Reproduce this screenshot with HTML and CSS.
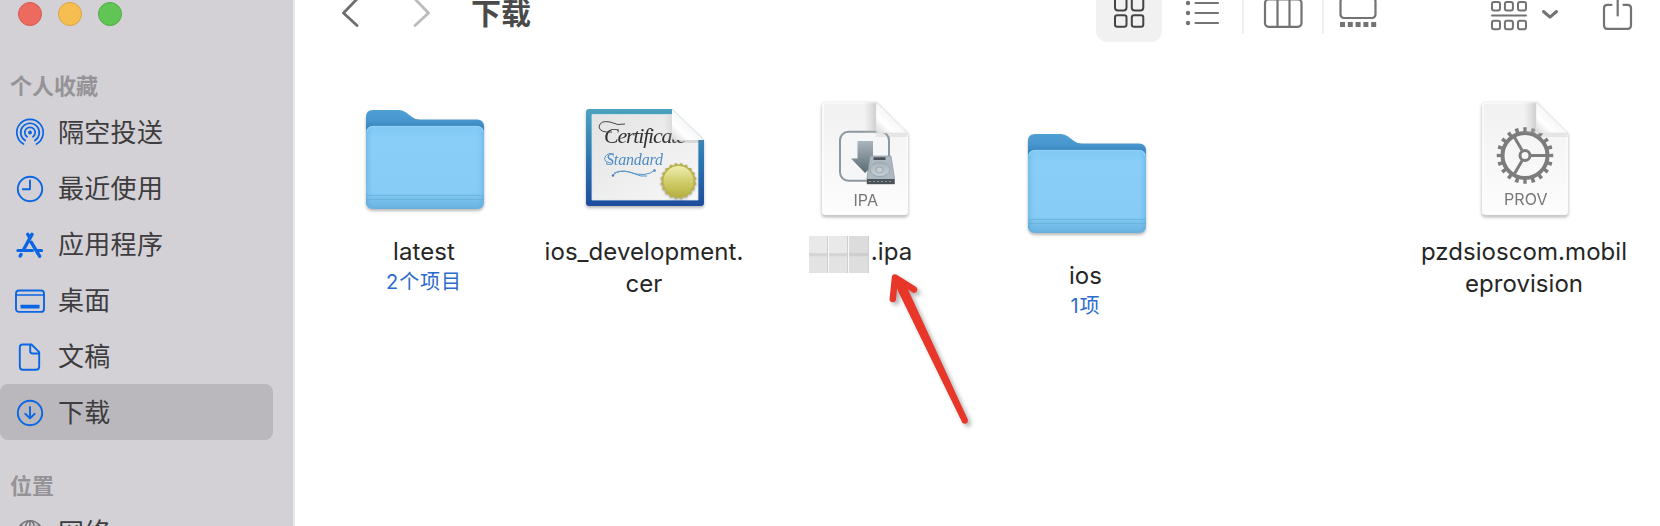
FILE: index.html
```html
<!DOCTYPE html>
<html lang="zh-CN">
<head>
<meta charset="utf-8">
<title>下载</title>
<link rel="stylesheet" href="styles.css">
</head>
<body>
<div class="window">
  <aside class="sidebar">
    <div class="lights"><span class="light red"></span><span class="light yellow"></span><span class="light green"></span></div>
    <h2 class="section">个人收藏</h2>
    <ul class="list">
      <li class="item"><svg class="glyph airdrop" viewBox="0 0 32 32"><circle cx="16" cy="15.500" r="1.900" fill="currentColor" stroke="none"/><path d="M13.100 19.800A5.200 5.200 0 1 1 18.900 19.800M11.200 23.500A9.300 9.300 0 1 1 20.800 23.500M9.500 27A13.200 13.200 0 1 1 22.500 27"/></svg><span>隔空投送</span></li>
      <li class="item"><svg class="glyph" viewBox="0 0 32 32"><circle cx="16" cy="16" r="12.2"/><path d="M16 7.5V16.3H8.8"/></svg><span>最近使用</span></li>
      <li class="item"><svg class="glyph" viewBox="0 0 32 32"><path stroke-width="3.4" d="M13.800 5.400 16 9M18 5.400 9.800 20.200M17.300 13.400 25.600 27.200M7 25.400 6.200 27"/><path stroke-width="3" d="M3.800 21.400H18.500M23.600 21.400H27.600"/></svg><span>应用程序</span></li>
      <li class="item"><svg class="glyph" viewBox="0 0 32 32"><rect x="2" y="5.5" width="28" height="21.4" rx="3"/><path stroke-width="1.5" d="M2 10H30"/><rect x="6.5" y="19.8" width="19" height="3.8" rx=".5" fill="currentColor" stroke="none"/></svg><span>桌面</span></li>
      <li class="item"><svg class="glyph" viewBox="0 0 32 32"><path d="M8.500 3.500H17.500L25.200 11.200V25.500Q25.200 28.800 22 28.800H8.800Q5.800 28.800 5.800 25.500V6.500Q5.800 3.500 8.500 3.500ZM16.200 3.500V10.300Q16.200 12.500 18.400 12.500H25"/></svg><span>文稿</span></li>
      <li class="item selected"><svg class="glyph" viewBox="0 0 32 32"><circle cx="16" cy="16" r="12.2"/><path d="M16 10V21M11.3 16.8 16 21.4 20.7 16.8"/></svg><span>下载</span></li>
    </ul>
    <h2 class="section places">位置</h2>
    <ul class="list">
      <li class="item"><svg class="glyph network" viewBox="0 0 32 32"><circle cx="16" cy="16" r="12.2"/><ellipse cx="16" cy="16" rx="5.5" ry="12.2"/><path d="M16 4V28M4 16H28M7 8.5Q16 14 25 8.5"/></svg><span>网络</span></li>
    </ul>
  </aside>

  <main class="main">
    <header class="toolbar">
      <svg class="nav" viewBox="340 0 92 42"><path stroke="#6e6e6e" d="M357-1 343.500 13 357 25.500"/><path stroke="#bcbcbc" d="M415-1 428.500 13 415 25.500"/></svg>
      <h1 class="title">下载</h1>
      <div class="views">
        <span class="view active"><svg width="66" height="42" viewBox="1096 0 66 42"><path stroke="#444" stroke-width="2" d="M1115 -2V7.500Q1115 10.500 1118 10.500H1123.500Q1126.500 10.500 1126.500 7.500V-2M1131.800 -2V7.500Q1131.800 10.500 1134.800 10.500H1140.300Q1143.300 10.500 1143.300 7.500V-2"/><rect x="1115" y="15.300" width="11.500" height="11.500" rx="2.300" stroke="#444" stroke-width="2"/><rect x="1131.800" y="15.300" width="11.500" height="11.500" rx="2.300" stroke="#444" stroke-width="2"/></svg></span>
        <span class="view list-view"><svg width="80" height="42" viewBox="1162 0 80 42"><path d="M1195.500 3H1218M1195.500 13H1218M1195.500 23H1218"/><g fill="#737373" stroke="none"><circle cx="1188" cy="3" r="2.200"/><circle cx="1188" cy="13" r="2.200"/><circle cx="1188" cy="23" r="2.200"/></g></svg></span>
        <span class="view column-view"><svg width="79" height="42" viewBox="1243 0 79 42"><rect x="1265" y="-.5" width="36.500" height="27.300" rx="3.500"/><path d="M1277.500 0V26M1289.500 0V26"/></svg></span>
        <span class="view gallery-view"><svg width="76" height="42" viewBox="1323 0 76 42"><rect x="1340.500" y="-2" width="35" height="20" rx="3.500"/><path stroke="#737373" stroke-width="5" stroke-linecap="butt" stroke-dasharray="5 2.800" d="M1340 24.500H1376.500"/></svg></span>
      </div>
      <svg class="tools" viewBox="1480 0 160 42"><g stroke-width="2"><rect x="1492" y="2" width="8" height="8.500" rx="2"/><rect x="1504.900" y="2" width="8" height="8.500" rx="2"/><rect x="1518" y="2" width="8" height="8.500" rx="2"/><rect x="1492" y="20.700" width="8" height="8.500" rx="2"/><rect x="1504.900" y="20.700" width="8" height="8.500" rx="2"/><rect x="1518" y="20.700" width="8" height="8.500" rx="2"/><path d="M1492 15.500H1526"/></g><path stroke-width="3" d="M1543.500 11.500 1550 17.200 1556.500 11.500"/><path stroke-width="2.200" d="M1611.500 4.800H1607.500Q1604 4.800 1604 8.300V25.200Q1604 28.800 1607.500 28.800H1627.500Q1631 28.800 1631 25.200V8.300Q1631 4.800 1627.500 4.800H1623.500M1617.700 -2V15.500"/></svg>
    </header>

    <section class="files">
      <svg class="defs" width="0" height="0">
        <defs>
          <linearGradient id="back" x1="0" y1="0" x2="0" y2="1"><stop offset="0" stop-color="#509fd3"/><stop offset=".12" stop-color="#4695ce"/><stop offset=".2" stop-color="#3780bb"/></linearGradient>
          <linearGradient id="front" x1="0" y1="0" x2="0" y2="1"><stop offset="0" stop-color="#80caf5"/><stop offset=".15" stop-color="#89cef9"/><stop offset=".8" stop-color="#86ccf7"/><stop offset=".87" stop-color="#7bc2ed"/><stop offset="1" stop-color="#68b1df"/></linearGradient>
          <linearGradient id="edge"><stop offset="0" stop-color="#4c9bce" stop-opacity=".35"/><stop offset=".06" stop-color="#6bb8e8" stop-opacity="0"/><stop offset=".94" stop-color="#6bb8e8" stop-opacity="0"/><stop offset="1" stop-color="#4c9bce" stop-opacity=".35"/></linearGradient>
          <linearGradient id="frame" x1="0" y1="0" x2="0" y2="1"><stop offset="0" stop-color="#4aa3bf"/><stop offset=".5" stop-color="#2d78b2"/><stop offset="1" stop-color="#1d4c9c"/></linearGradient>
          <linearGradient id="sheet" x1="0" y1="0" x2="0" y2="1"><stop offset="0" stop-color="#f1f1f1"/><stop offset="1" stop-color="#fdfdfd"/></linearGradient>
          <linearGradient id="paper" x1="0" y1="0" x2="1" y2="1"><stop offset="0" stop-color="#e3e3e3"/><stop offset="1" stop-color="#f8f8f8"/></linearGradient>
          <linearGradient id="fold" x1=".5" y1=".5" x2="0" y2="1"><stop offset="0" stop-color="#f7f7f7"/><stop offset=".45" stop-color="#fff"/><stop offset="1" stop-color="#d7d7d7"/></linearGradient>
          <linearGradient id="shade"><stop offset="0" stop-color="#bbb" stop-opacity="0"/><stop offset="1" stop-color="#aaa" stop-opacity=".5"/></linearGradient>
          <linearGradient id="gold" x1="0" y1="0" x2="0" y2="1"><stop offset="0" stop-color="#eeedae"/><stop offset=".5" stop-color="#d3cf70"/><stop offset="1" stop-color="#b8b040"/></linearGradient>
          <linearGradient id="steel" x1="0" y1="0" x2="0" y2="1"><stop offset="0" stop-color="#aab6bd"/><stop offset="1" stop-color="#5b6a73"/></linearGradient>
          <linearGradient id="disk" x1="0" y1="0" x2="0" y2="1"><stop offset="0" stop-color="#a9b5bc"/><stop offset="1" stop-color="#c5d0d6"/></linearGradient>
          <symbol id="folder" viewBox="0 0 130 130">
            <path fill="url(#back)" d="M7 109V22Q7 15 14 15H40Q44 15 47 17.500L53 22Q56 24.500 61 24.500H118Q125 24.500 125 32V106Z"/>
            <path fill="url(#front)" d="M7 38Q7 31 14 31H118Q125 31 125 38V106Q125 114 118 114H14Q7 114 7 106Z"/>
            <path fill="url(#edge)" d="M7 38Q7 31 14 31H118Q125 31 125 38V106Q125 114 118 114H14Q7 114 7 106Z"/>
            <path fill="none" stroke="#9cd7fb" stroke-width=".8" d="M8 37Q9 31.400 14 31.400H118Q123 31.400 124 37"/>
            <path stroke="#62aeda" stroke-width="1" opacity=".65" d="M7 100.500H125M7 104.500H125"/>
          </symbol>
          <symbol id="document" viewBox="0 0 130 130">
            <path fill="url(#sheet)" stroke="#e4e4e4" stroke-width=".6" d="M26 7H77L108 38V117Q108 120 105 120H25Q22 120 22 117V10Q22 7 26 7Z"/>
            <path fill="none" stroke="#fff" stroke-width="1.200" d="M23 118V11Q23 8 26 8H76M107 39V116Q107 119 104 119H25"/>
          </symbol>
          <symbol id="corner" viewBox="0 0 130 130">
            <path fill="url(#shade)" d="M64 7.500H76V38H64Z"/>
            <path fill="#999" opacity=".16" d="M76 38H108V42H76Z"/>
            <path fill="url(#fold)" stroke="#ddd" stroke-width=".5" d="M76 7 108 38H78Q76 38 76 35Z"/>
          </symbol>
        </defs>
      </svg>

      <article class="file">
        <svg class="icon"><use href="#folder"/></svg>
        <div class="name">latest</div><div class="count">2个项目</div>
      </article>

      <article class="file">
        <svg class="icon" viewBox="579 95 130 130">
          <path fill="url(#frame)" d="M589 109H672L704 140V203Q704 206 701 206H589Q586 206 586 203V112Q586 109 589 109Z"/>
          <path fill="url(#paper)" stroke="#dbe7ee" stroke-width=".8" d="M592 114.500H673L698 139V200H592Z"/>
          <text class="cert" x="604" y="143" textLength="82">Certificate</text>
          <path fill="none" stroke="#444" stroke-width="1" d="M612 132Q600 133 599 127Q600 120 610 122Q618 126 625 124"/>
          <text class="standard" x="606" y="164.500" textLength="57">Standard</text>
          <path fill="none" stroke="#5b95c9" stroke-width="1" d="M611 163Q603 162 605 157Q608 152 614 154M613 175Q619 169 629 172Q646 178 655 170M614 173Q625 169 635 174Q641 177 647 176"/><circle cx="613" cy="175.500" r="1.300" fill="#4b83bd"/><circle cx="654.500" cy="170.500" r="1.300" fill="#4b83bd"/>
          <path fill="url(#shade)" opacity=".5" d="M663 115H672V140H663Z"/>
          <path fill="#777" opacity=".2" d="M672 140H704V143H672Z"/>
          <path fill="url(#fold)" d="M672 109 704 140H675Q672 140 672 137Z"/>
          <g class="seal" transform="translate(678.500 181)"><g fill="#b9b14a"><rect x="-13" y="-13" width="26" height="26"/><rect x="-13" y="-13" width="26" height="26" transform="rotate(18)"/><rect x="-13" y="-13" width="26" height="26" transform="rotate(36)"/><rect x="-13" y="-13" width="26" height="26" transform="rotate(54)"/><rect x="-13" y="-13" width="26" height="26" transform="rotate(72)"/></g><circle r="15" fill="url(#gold)"/></g>
        </svg>
        <div class="name">ios_development.<br>cer</div>
      </article>

      <article class="file">
        <svg class="icon" viewBox="799 95 130 130">
          <use href="#document" x="800" y="95" width="130" height="130"/>
          <rect x="840" y="131.700" width="49" height="49" rx="8.500" fill="#f5f6f8" stroke="#8e999f" stroke-width="2"/>
          <path fill="url(#steel)" d="M857.500 141H873V158.500H880L865 173 851 158.500H857.500Z"/>
          <path fill="#adb9c0" stroke="#7e8b93" stroke-width=".6" d="M870 156H891L894.500 178V184H867V178Z"/><path fill="#4a5257" d="M867 179H894.500V184H867ZM873.500 157.300H885.500V160H873.500Z"/>
          <ellipse cx="880" cy="169.500" rx="10" ry="7" fill="url(#disk)" stroke="#8c989f" stroke-width=".7"/><ellipse cx="879.500" cy="170" rx="3.600" ry="2.900" fill="#c4ced3" stroke="#8c989f" stroke-width=".7"/><path stroke="#87949b" stroke-width="1.200" stroke-dasharray="2 2" d="M869 181.500H893"/>
          <use href="#corner" x="800" y="95" width="130" height="130"/>
          <text class="kind" x="853.500" y="205.800" textLength="24.500">IPA</text>
        </svg>
        <div class="name ipa"><span class="mosaic"><i></i><i></i><i></i></span>.ipa</div>
      </article>

      <article class="file lower">
        <svg class="icon"><use href="#folder"/></svg>
        <div class="name">ios</div><div class="count">1项</div>
      </article>

      <article class="file last">
        <svg class="icon" viewBox="1459 95 130 130">
          <use href="#document" x="1460" y="95" width="130" height="130"/>
          <g transform="translate(1525 155.500)" fill="none" stroke="#7c7c7c"><circle r="22.500" stroke-width="4"/><circle r="26" stroke-width="4.500" pathLength="40" stroke-dasharray=".85 1.150" stroke-dashoffset=".425"/><circle r="5" stroke-width="3"/><path stroke-width="3" d="M6 0H22M-3 5.200-11 19M-3-5.200-11-19"/></g>
          <use href="#corner" x="1460" y="95" width="130" height="130"/>
          <text class="kind" x="1504" y="205" textLength="43.500">PROV</text>
        </svg>
        <div class="name">pzdsioscom.mobil<br>eprovision</div>
      </article>
    </section>
  </main>

  <svg class="arrow" viewBox="870 265 120 170"><path fill="none" stroke="#e83628" stroke-width="6.500" stroke-linecap="round" stroke-linejoin="round" d="M892.800 299 895 277.500 914 289.500"/><path fill="none" stroke="#e83628" stroke-width="5.500" stroke-linecap="round" d="M895.500 278 965 421"/><path fill="#e83628" d="M895 277 905 283 968 420 962.500 423 898 291Z"/></svg>
</div>
</body>
</html>
```
FILE: styles.css
```css
* { box-sizing: border-box; }
body { margin: 0; background: #fff; font-family: Inter, "Noto Sans CJK SC", sans-serif; }
h1, h2, ul { margin: 0; padding: 0; list-style: none; }
.window { position: relative; display: flex; width: 1660px; height: 526px; overflow: hidden; }

.sidebar { flex: none; width: 295px; height: 526px; overflow: hidden; background: #d3d1d5; border-right: 2px solid #e7e6e8; }
.lights { display: flex; gap: 16px; height: 69px; padding: 2px 0 0 18px; }
.light { width: 24px; height: 24px; border-radius: 50%; border: 1px solid; }
.red { background: #ed6a5f; border-color: #d55a50; }
.yellow { background: #f6be50; border-color: #daa441; }
.green { background: #61c555; border-color: #50ac45; }
.section { height: 35px; padding-left: 10px; font-size: 22px; line-height: 34px; font-weight: 700; color: #959397; }
.item { display: flex; align-items: center; gap: 12px; width: 273px; height: 56px; padding: 2px 0 0 14px; font-size: 26px; letter-spacing: .3px; line-height: 54px; color: #3d3c3f; }
.selected { background: #bab8bc; border-radius: 8px; }
.places { margin-top: 29px; }
.glyph { width: 32px; height: 32px; color: #0a66e4; fill: none; stroke: currentColor; stroke-width: 1.9; stroke-linecap: round; stroke-linejoin: round; }
.airdrop { stroke-width: 1.7; }
.network { color: #77757a; stroke-width: 1.6; }

.main { flex: 1; background: #fff; }
.toolbar { display: flex; height: 42px; padding-left: 45px; overflow: hidden; }
.toolbar svg { flex: none; height: 42px; fill: none; stroke: #737373; stroke-width: 2.2; stroke-linecap: round; stroke-linejoin: round; }
.toolbar .nav { width: 92px; stroke-width: 2.8; }
.title { margin-left: 39px; width: 625px; font-size: 30px; line-height: 26px; font-weight: 700; color: #4a4a4a; }
.views { display: flex; }
.view { display: flex; height: 42px; }
.active { background: #f1f1f1; border-radius: 0 0 11px 11px; }
.column-view, .gallery-view { position: relative; padding-left: 1px; }
.column-view::before, .gallery-view::before { content: ""; position: absolute; left: 0; top: 0; width: 2px; height: 34px; background: #efefef; }
.toolbar .tools { width: 160px; margin-left: 81px; }

.files { display: grid; grid-template-columns: repeat(6, 220px); padding: 53px 0 0 19px; }
.defs { position: absolute; }
.file { display: flex; flex-direction: column; align-items: center; }
.last { grid-column: 6; }
.lower { padding: 24px 0 0 3px; }
.icon { width: 130px; height: 130px; margin-bottom: 11px; filter: drop-shadow(0 2px 1.5px rgba(0, 0, 0, .28)); }
.name { font-size: 24px; line-height: 32px; letter-spacing: .06px; color: #262626; text-align: center; white-space: nowrap; }
.count { font-size: 20px; line-height: 28px; letter-spacing: .9px; color: #2c6ccc; }
.ipa { display: flex; align-items: center; margin-left: -7px; }
.mosaic { display: flex; gap: 1px; width: 60px; height: 37px; margin: 0 2px -5px 0; background: #f8f8f8; }
.mosaic i { flex: 1; background: linear-gradient(#e9e9e9 45%, #d5d5d5 46% 54%, #e3e3e3 56%); border-right: 1px solid #cfcfcf; }
.mosaic i:last-child { background: linear-gradient(#dcdcdc 45%, #cecece 46% 54%, #dedede 56%); }
.kind { font: 16px Inter, sans-serif; fill: #777; }
.cert { font: italic 22px "Liberation Serif", serif; fill: #333; }
.standard { font: italic 16px "Liberation Serif", serif; fill: #4e8bc4; }
.seal { filter: drop-shadow(0 1px 1px rgba(0, 0, 0, .35)); }
.arrow { position: absolute; left: 870px; top: 265px; width: 120px; height: 170px; filter: drop-shadow(3px 3px 2px rgba(0, 0, 0, .3)); }
```
